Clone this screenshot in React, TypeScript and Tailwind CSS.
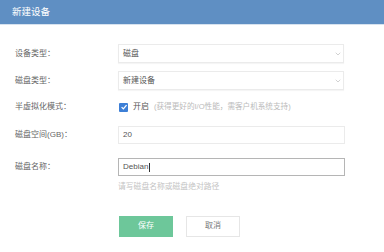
import { ChevronDown } from "lucide-react";

const font = { fontFamily: '"Liberation Sans","Noto Sans CJK SC",sans-serif' };

function Label({ text }: { text: string }) {
  return <div className="w-[118px] shrink-0 pl-[15px] text-[8px] text-[#666]">{text}</div>;
}

function Select({ value }: { value: string }) {
  return (
    <div className="flex h-[19px] w-[226px] items-center justify-between border border-[#ebebeb] pl-[4px] pr-[1px] text-[8px] text-[#555] shadow-[0_1px_1px_rgba(0,0,0,0.04)]">
      <span>{value}</span>
      <ChevronDown className="h-[8px] w-[8px] text-[#aaa]" strokeWidth={1.6} />
    </div>
  );
}

export default function App() {
  return (
    <div className="h-[252px] w-[384px] overflow-hidden bg-white" style={font}>
      <div className="flex h-[25px] items-center border-b border-[#d6e2ef] bg-[#5f8fc3] px-[12px] text-[9.5px] text-white">
        新建设备
      </div>

      <div className="flex flex-col">
        <div className="mt-[19px] flex items-center">
          <Label text="设备类型：" />
          <Select value="磁盘" />
        </div>
        <div className="mt-[8px] flex items-center">
          <Label text="磁盘类型：" />
          <Select value="新建设备" />
        </div>
        <div className="mt-[8px] flex h-[18px] items-center">
          <Label text="半虚拟化模式：" />
          <div className="flex items-center">
            <span className="ml-[1px] flex h-[9px] w-[9px] items-center justify-center rounded-[1px] bg-[#3d7fd6]">
              <svg viewBox="0 0 10 10" className="h-[8px] w-[8px]">
                <path d="M2 5.2 L4.2 7.4 L8.2 2.6" fill="none" stroke="white" strokeWidth="1.6" />
              </svg>
            </span>
            <span className="ml-[5px] text-[8px] text-[#555]">开启</span>
            <span className="ml-[5px] text-[7.6px] text-[#bbb]">(获得更好的I/O性能，需客户机系统支持)</span>
          </div>
        </div>
        <div className="mt-[10px] flex items-center">
          <Label text="磁盘空间(GB)：" />
          <div className="flex h-[18px] w-[227px] items-center border border-[#ebebeb] pl-[4px] text-[8px] text-[#555]">
            20
          </div>
        </div>
        <div className="mt-[14px] flex items-center">
          <Label text="磁盘名称：" />
          <div className="flex h-[18px] w-[227px] items-center border border-[#b5b5b5] pl-[4px] text-[8px] text-[#555]">
            Debian
            <span className="ml-[0.5px] h-[9px] w-[1px] bg-[#333]" />
          </div>
        </div>
        <div className="mt-[5px] pl-[118px] text-[7.8px] text-[#c4c4c4]">请写磁盘名称或磁盘绝对路径</div>
        <div className="mt-[23px] flex pl-[119px]">
          <button className="h-[21px] w-[54px] bg-[#6dc79a] text-[8px] text-white">保存</button>
          <button className="ml-[13px] h-[21px] w-[54px] border border-[#e6e6e6] bg-white text-[8px] text-[#777]">
            取消
          </button>
        </div>
      </div>
    </div>
  );
}
